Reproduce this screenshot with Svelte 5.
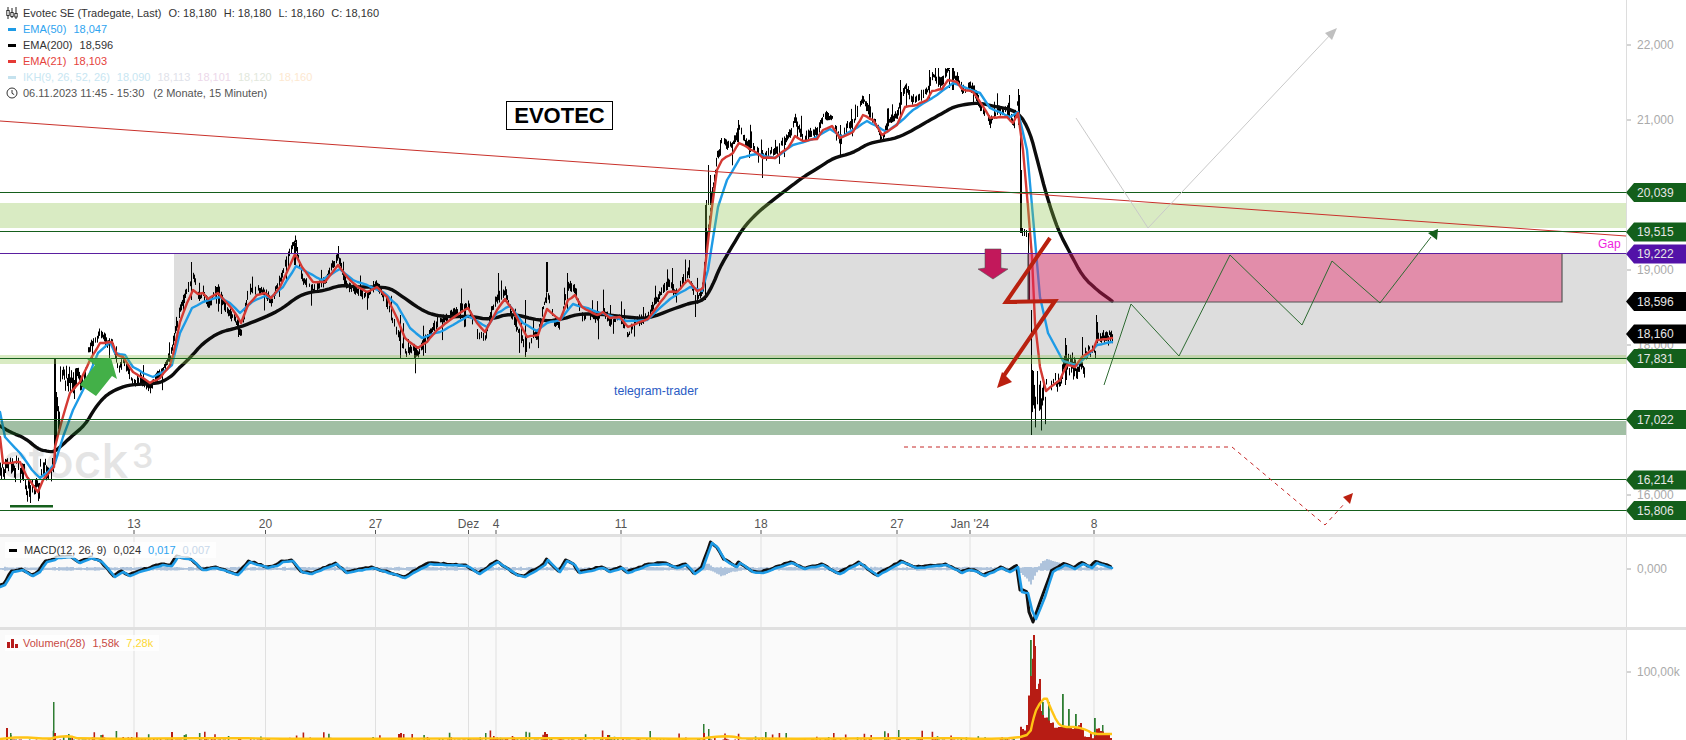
<script>
  function mulberry(a) {
    return () => {
      a |= 0; a = (a + 0x6d2b79f5) | 0;
      let t = Math.imul(a ^ (a >>> 15), 1 | a);
      t = (t + Math.imul(t ^ (t >>> 7), 61 | t)) ^ t;
      return ((t ^ (t >>> 14)) >>> 0) / 4294967296;
    };
  }
  const toPath = (p) => 'M' + p.map((q) => q[0].toFixed(1) + ' ' + q[1].toFixed(1)).join('L');
  const interp = (p, x) => {
    if (x <= p[0][0]) return p[0][1];
    for (let i = 1; i < p.length; i++) {
      if (x <= p[i][0]) {
        const [a, b] = p[i - 1], [c, d] = p[i];
        return b + ((d - b) * (x - a)) / (c - a || 1);
      }
    }
    return p[p.length - 1][1];
  };
  const chaikin = (p) => {
    const out = [p[0]];
    for (let i = 0; i < p.length - 1; i++) {
      const [a, b] = p[i], [c, d] = p[i + 1];
      out.push([a * 0.75 + c * 0.25, b * 0.75 + d * 0.25], [a * 0.25 + c * 0.75, b * 0.25 + d * 0.75]);
    }
    out.push(p[p.length - 1]);
    return out;
  };
  const wiggle = (p, seed, amt, step) => {
    const r = mulberry(seed);
    const out = [];
    for (let i = 0; i < p.length - 1; i++) {
      const [a, b] = p[i], [c, d] = p[i + 1];
      const n = Math.max(1, Math.round(Math.abs(c - a) / step));
      for (let k = 0; k < n; k++) {
        const t = k / n;
        out.push([a + (c - a) * t, b + (d - b) * t + (k === 0 ? 0 : (r() - 0.5) * amt)]);
      }
    }
    out.push(p[p.length - 1]);
    return out;
  };

  const red = [[0,437],[3,463],[8,463],[20,462],[27,477],[38,492],[43,480],[54,467],[55,447],[62,420],[70,393],[80,382],[90,360],[100,343],[112,342],[117,355],[123,357],[133,372],[143,378],[150,383],[160,378],[170,365],[173,355],[180,322],[187,303],[193,290],[198,294],[203,293],[208,299],[218,293],[227,303],[235,313],[241,323],[248,305],[257,295],[265,293],[271,298],[280,287],[287,272],[295,254],[302,267],[313,282],[325,282],[338,265],[348,278],[358,287],[367,292],[377,287],[387,297],[397,318],[405,338],[418,348],[427,342],[437,330],[450,320],[457,315],[468,308],[477,323],[485,332],[497,310],[505,299],[513,310],[527,337],[538,335],[547,309],[560,320],[568,300],[575,295],[582,307],[597,315],[603,312],[610,318],[620,317],[628,327],[648,319],[657,307],[668,292],[677,292],[688,280],[697,291],[703,288],[707,250],[712,207],[717,170],[722,160],[733,153],[739,143],[747,147],[757,153],[763,158],[775,158],[782,152],[788,148],[795,136],[803,141],[817,139],[823,130],[832,126],[840,138],[853,132],[863,115],[873,120],[882,135],[897,125],[905,107],[917,105],[927,100],[932,91],[942,89],[948,80],[957,82],[962,89],[973,92],[982,105],[990,118],[1000,117],[1007,117],[1013,123],[1018,113],[1023,150],[1028,207],[1032,257],[1035,323],[1040,367],[1046,391],[1060,380],[1067,365],[1075,367],[1082,357],[1093,350],[1097,340],[1107,339],[1112,338]];

  const blue = [[0,412],[5,437],[20,453],[32,470],[40,478],[48,472],[55,463],[63,437],[73,410],[83,390],[98,353],[110,342],[115,353],[125,355],[133,367],[143,373],[153,377],[163,372],[172,365],[180,333],[192,308],[203,302],[220,297],[230,303],[240,313],[252,302],[265,296],[270,298],[283,287],[296,266],[307,272],[322,280],[340,269],[353,280],[367,285],[383,292],[397,305],[410,328],[422,338],[430,335],[440,332],[453,325],[468,316],[487,327],[497,313],[510,306],[523,323],[537,331],[547,323],[560,320],[573,304],[583,307],[607,315],[627,321],[647,320],[670,299],[690,287],[702,291],[708,270],[718,207],[727,180],[740,158],[757,154],[775,158],[793,145],[813,139],[830,129],[842,137],[867,121],[887,132],[900,122],[913,110],[937,95],[953,83],[980,93],[990,108],[1010,117],[1018,112],[1027,150],[1033,217],[1040,297],[1048,333],[1063,361],[1077,365],[1088,355],[1097,345],[1112,342]];

  const black = [[0,426],[10,432],[25,438],[38,449],[46,451],[54,452],[60,447],[72,436],[85,425],[95,408],[105,396],[115,390],[128,385],[145,384],[160,383],[172,376],[177,370],[190,358],[203,343],[220,332],[237,328],[253,322],[270,315],[283,308],[297,297],[310,292],[323,291],[340,285],[357,287],[377,287],[390,288],[403,297],[420,309],[433,315],[450,317],[470,316],[490,320],[510,313],[540,321],[560,320],[577,314],[600,314],[627,317],[647,319],[673,309],[690,303],[703,301],[712,287],[720,267],[730,250],[743,228],[757,213],[773,200],[790,187],[803,177],[820,167],[833,158],[853,153],[867,144],[880,141],[897,138],[913,130],[930,120],[943,113],[953,107],[967,104],[980,103],[993,106],[1018,111],[1030,132],[1038,163],[1047,197],[1058,230],[1070,253],[1083,277],[1097,290],[1112,301]];

  const rnd = mulberry(41);
  let priceD = '';
  const bar = (x, a, b) => { priceD += `M${x + 0.5} ${a.toFixed(1)}V${b.toFixed(1)}`; };
  const massSegments = [
    [0, 25, 455, 482], [25, 40, 475, 505], [40, 54, 456, 480], [55, 60, 395, 435], [60, 86, 365, 398],
    [1031, 1046, 370, 424], [1046, 1062, 373, 390], [1062, 1075, 352, 382], [1075, 1085, 358, 378],
    [1085, 1096, 345, 358], [1096, 1113, 328, 345]
  ];
  for (const [a, b, t, u] of massSegments) {
    for (let x = a; x < b; x++) {
      if (rnd() < 0.15) continue;
      const h = u - t;
      const s = t + rnd() * h * 0.55;
      bar(x, s, s + h * (0.2 + rnd() * 0.45));
    }
  }
  for (let x = 86; x < 1019; x++) {
    if (rnd() < 0.22) continue;
    let lead = (interp(red, x) - interp(red, x - 7)) * 0.9;
    lead = Math.max(-14, Math.min(14, lead));
    const c = interp(red, x) + lead - (x > 720 ? 6 : 0);
    let top = c - rnd() * 5 - 1;
    let bot = c + rnd() * 5 + 1;
    const s = rnd();
    if (s < (x > 720 ? 0.12 : 0.08)) top -= 6 + rnd() * 15;
    else if (s < 0.16) bot += 6 + rnd() * 12;
    const ceil = interp(red, x) - 24;
    bar(x, Math.max(top, ceil, 68), bot);
  }
  const spikes = [
    [54,358,462],[55,358,462],[56,392,440],[546,262,292],[547,262,292],[525,300,357],[498,273,300],[567,273,310],[695,295,317],
    [294,243,265],[295,243,265],[191,262,300],[400,315,358],[414,350,358],[423,335,356],[238,320,337],
    [900,80,118],[929,70,100],[952,68,90],[953,68,90],[949,70,88],[738,120,145],[840,125,155],[1018,90,125],[1019,95,125],[762,150,178],
    [705,205,300],[706,200,260],[708,165,205],[710,175,205],[1020,125,233],[1021,170,233],[1022,228,236],[1024,229,236],[1026,230,237],[1028,233,300],[1029,270,300],[1031,310,435],[1032,370,410],[1065,338,385],[1066,345,380],[1082,337,357],[1096,315,340],[1097,322,338]
  ];
  spikes.forEach(([x, a, b]) => bar(x, a, b));

  const macdBlue = [[0,587],[5,585],[13,572],[23,570],[33,576],[40,572],[47,562],[55,560],[58,558],[72,557],[80,563],[92,558],[102,562],[115,577],[123,572],[130,576],[143,571],[163,565],[172,566],[178,557],[192,560],[203,570],[217,568],[238,575],[250,562],[268,568],[277,566],[283,562],[293,561],[302,572],[312,574],[337,564],[347,573],[373,568],[405,578],[430,564],[467,566],[480,574],[498,562],[517,575],[525,577],[545,565],[548,560],[560,572],[567,561],[575,565],[580,573],[603,568],[610,572],[622,568],[628,573],[650,565],[667,564],[677,568],[687,565],[695,574],[703,568],[712,543],[718,548],[725,560],[737,567],[740,563],[753,572],[763,573],[780,567],[792,563],[805,569],[823,565],[840,574],[860,563],[878,576],[902,562],[917,568],[947,565],[962,573],[970,570],[978,572],[985,576],[1002,568],[1010,572],[1018,567],[1022,592],[1028,593],[1032,610],[1036,619],[1045,597],[1053,572],[1065,565],[1075,569],[1083,564],[1092,568],[1097,563],[1112,568]];
  const macdBlack = macdBlue.map(([x, y]) => {
    if (x === 1022) return [1020, 590];
    if (x === 1032) return [1029, 612];
    if (x === 1036) return [1033, 622];
    if (x === 1045) return [1043, 594];
    return [x - 1.5, y - (x < 1010 ? 1 : 1.5)];
  });
  const histShape = [[0,0],[695,0],[703,-2],[707,-5],[712,1],[721,6],[730,2],[740,0],[1012,0],[1020,3],[1026,8],[1030,14],[1034,5],[1037,0],[1042,-6],[1046,-8],[1055,-6],[1062,-2],[1068,0],[1112,0]];
  const rh = mulberry(7);
  let histD = '';
  for (let x = 0; x < 1112; x += 2) {
    const v = interp(histShape, x);
    const n = rh() * 1.2 + 1;
    histD += `M${x} ${(569 + Math.min(v, 0) - n).toFixed(1)}H${x + 2}V${(569 + Math.max(v, 0) + n * 0.8).toFixed(1)}H${x}Z`;
  }

  const env = [[205,630],[205,585],[215,585],[218,610],[228,580],[235,480],[243,400],[249,315],[255,315],[256,470],[262,447],[267,447],[268,520],[272,555],[290,555],[295,570],[305,575],[312,590],[335,590],[350,590],[370,595],[385,585],[392,575],[400,618],[430,625],[440,585],[450,600],[470,610],[485,630]]
    .map(([a, b]) => [950 + a / 3, 530 + b / 3]);
  const rv = mulberry(13);
  let redBars = '', greenBars = '';
  for (let x = 0; x < 1018; x += 1.7) {
    const s = rv();
    if (s < 0.45) continue;
    const h = Math.pow(rv(), 5) * 9 + 0.5;
    const d = `M${x.toFixed(1)} 740V${(740 - h).toFixed(1)}h1.6V740Z`;
    if (rv() < 0.62) redBars += d; else greenBars += d;
  }
  for (let x = 1018; x < 1112; x += 2) {
    const top = interp(env, x);
    const y = 740 - (740 - top) * (0.88 + rv() * 0.12);
    redBars += `M${x} 740V${y.toFixed(1)}h2V740Z`;
  }
  [[6,728],[54,733],[171,732],[400,733],[398,734],[544,732],[546,734],[607,735],[703,733],[1090,733],[1033,635],[1039,679]].forEach(([x, y]) => {
    redBars += `M${x} 740V${y}h2V740Z`;
  });
  [[53,702],[10,733],[171,732],[703,724],[708,729],[898,730],[485,733],[1102,725]].forEach(([x, y]) => {
    greenBars += `M${x} 740V${y}h1.5V740Z`;
  });
  [[1030,640],[1033,667],[1036,693],[1042,702],[1062,694],[1068,709],[1075,714],[1094,718],[1048,702]].forEach(([x, y]) => {
    greenBars += `M${x} 740V${y}h1.8V740Z`;
  });
  const volLine = [[0,739],[20,737],[50,739],[56,737],[70,736],[80,739],[230,738],[300,739],[600,738],[700,739],[712,737],[730,736],[745,739],[950,738],[983,739],[1017,738],[1030,734],[1033,720],[1037,707],[1046,696],[1050,707],[1057,722],[1063,727],[1077,727],[1087,730],[1093,734],[1112,734]];

  const redLine = toPath(wiggle(red, 3, 1, 4));
  const blueLine = toPath(wiggle(blue, 5, 0.8, 5));
  const blackLine = toPath(chaikin(chaikin(black)));
  const macdB = toPath(wiggle(macdBlack, 9, 1.4, 3));
  const macdL = toPath(wiggle(macdBlue, 11, 1, 4));
  const volPath = toPath(chaikin(volLine));

  const xTicks = [[134,'13'],[265.5,'20'],[375.5,'27'],[468.5,'Dez'],[496,'4'],[621,'11'],[761,'18'],[897,'27'],[970,"Jan '24"],[1094,'8']];
  const hLines = [[192,'lv'],[231,'lv'],[358,'lv'],[419,'lv'],[479,'lv'],[510,'lv']];
  const yLabels = [[45,'22,000'],[120,'21,000'],[270,'19,000'],[345,'18,000'],[495,'16,000']];
  const tags = [
    [192.5,'20,039','green'],[232,'19,515','green'],[254,'19,222','purple'],[301.5,'18,596','dark'],
    [334,'18,160','dark'],[358.5,'17,831','green'],[419.5,'17,022','green'],[480,'16,214','green'],[510.5,'15,806','green']
  ];
  const tagShape = (y) => `1626,${y} 1634,${y - 9.5} 1686,${y - 9.5} 1686,${y + 9.5} 1634,${y + 9.5}`;
</script>

<div class="chart">
  <section class="pane main">
    <svg class="plot" width="1626" height="534" viewBox="0 0 1626 534">
      <rect class="grey" x="174" y="253" width="1452" height="105" />
      <text class="mark" x="3" y="478">stock</text>
      <text class="mark sup" x="132" y="468">3</text>

      <path class="price" d={priceD} />
      <path class="e200" d={blackLine} />
      <path class="e50" d={blueLine} />
      <path class="e21" d={redLine} />

      <rect class="lime" x="0" y="203" width="1626" height="25" />
      <rect class="lime" x="0" y="355" width="1626" height="9" />
      <rect class="deep" x="0" y="421" width="1626" height="14" />
      <rect class="rose" x="1028" y="253" width="534" height="49" />
      <path class="roseedge" d="M1028 253V302H1562V253" />

      <line class="trend" x1="0" y1="121" x2="1626" y2="236" />
      {#each hLines as [y]}
        <line class="lv" x1="0" x2="1626" y1={y + 0.5} y2={y + 0.5} />
      {/each}
      <line class="lp" x1="0" x2="1626" y1="253.5" y2="253.5" />

      <polygon class="ga" points="80,385 96,396 112,376 117,379 111,358 87,359 95,365" />
      <polygon class="pa" points="985,249 1001,249 1001,268 1008,269 993,279 978,269 985,268" />
      <polyline class="ra" points="1050,238 1006,302 1055,301 1003,377" />
      <polygon class="rh" points="997,388 1002,372 1012,382" />

      <polyline class="gl" points="1076,118 1148,228 1332,33" />
      <polygon class="glh" points="1337,28 1325,33 1332,40" />
      <polyline class="zz" points="1104,385 1131,304 1179,356 1230,255 1302,325 1332,261 1380,303 1431,237" />
      <polygon class="zzh" points="1428,233 1438,229 1437,240" />
      <polyline class="dash" points="904,447 1232,447 1325,525 1345,503" />
      <polygon class="rh" points="1343,497 1353,493 1350,504" />
      <rect class="lowbar" x="10" y="505" width="43" height="2.5" />

      <text class="tg" x="614" y="395">telegram-trader</text>
      <text class="gap" x="1598" y="248">Gap</text>

      {#each xTicks as [x, t]}
        <line class="tick" x1={x} x2={x} y1="530" y2="534" />
        <text class="xl" x={x} y="528">{t}</text>
      {/each}
    </svg>

    <svg class="axis" width="60" height="534" viewBox="1626 0 60 534">
      <line class="ax" x1="1626.5" x2="1626.5" y1="0" y2="534" />
      {#each yLabels as [y, t]}
        <line class="axt" x1="1627" x2="1631" y1={y} y2={y} />
        <text class="yl" x="1637" y={y + 4}>{t}</text>
      {/each}
      {#each tags as [y, t, k]}
        <polygon class={k} points={tagShape(y)} />
        <text class="tt" x="1637" y={y + 4}>{t}</text>
      {/each}
    </svg>

    <div class="evotec">EVOTEC</div>

    <div class="legend">
      <div class="row">
        <svg class="ic" width="12" height="12" viewBox="0 0 12 12">
          <path d="M2 0V12M6 1V11M10 0V12" stroke="#222" fill="none" />
          <rect x="0.8" y="3.5" width="2.4" height="5" fill="#fff" stroke="#222" stroke-width=".9" />
          <rect x="4.8" y="5.5" width="2.4" height="4" fill="#fff" stroke="#222" stroke-width=".9" />
          <rect x="8.8" y="6.5" width="2.4" height="3.5" fill="#fff" stroke="#222" stroke-width=".9" />
        </svg>
        <span class="dk">Evotec SE (Tradegate, Last)</span>
        <span class="dk">O: 18,180</span><span class="dk">H: 18,180</span><span class="dk">L: 18,160</span><span class="dk">C: 18,160</span>
      </div>
      <div class="row"><i class="dash-ic c-blue"></i><span class="t-blue">EMA(50)</span><span class="t-blue">18,047</span></div>
      <div class="row"><i class="dash-ic c-black"></i><span class="dk">EMA(200)</span><span class="dk">18,596</span></div>
      <div class="row"><i class="dash-ic c-red"></i><span class="t-red">EMA(21)</span><span class="t-red">18,103</span></div>
      <div class="row"><i class="dash-ic c-ikh"></i><span class="t-i1">IKH(9, 26, 52, 26)</span><span class="t-i2">18,090</span><span class="t-i3">18,113</span><span class="t-i4">18,101</span><span class="t-i5">18,120</span><span class="t-i6">18,160</span></div>
      <div class="row">
        <svg class="ic" width="12" height="12" viewBox="0 0 12 12">
          <circle cx="6" cy="6" r="5" fill="none" stroke="#333" />
          <path d="M6 3V6.3L8.2 7.6" fill="none" stroke="#333" />
        </svg>
        <span class="gy wide">06.11.2023 11:45 - 15:30</span><span class="gy">(2 Monate, 15 Minuten)</span>
      </div>
    </div>
  </section>

  <div class="sep"></div>

  <section class="pane sub macd">
    <svg class="plot" width="1626" height="90" viewBox="0 537 1626 90">
      {#each xTicks as [x]}
        <line class="grid" x1={x} x2={x} y1="537" y2="627" />
      {/each}
      <path class="hist" d={histD} />
      <path class="mb" d={macdB} />
      <path class="ml" d={macdL} />
    </svg>
    <svg class="axis" width="60" height="90" viewBox="1626 537 60 90">
      <line class="ax" x1="1626.5" x2="1626.5" y1="537" y2="627" />
      <line class="axt" x1="1627" x2="1631" y1="569" y2="569" />
      <text class="yl" x="1637" y="573">0,000</text>
    </svg>
    <div class="legend small">
      <div class="row chip"><i class="dash-ic c-black"></i><span class="dk">MACD(12, 26, 9)</span><span class="dk">0,024</span><span class="t-blue">0,017</span><span class="t-sig">0,007</span></div>
    </div>
  </section>

  <div class="sep"></div>

  <section class="pane sub vol">
    <svg class="plot" width="1626" height="110" viewBox="0 630 1626 110">
      {#each xTicks as [x]}
        <line class="grid" x1={x} x2={x} y1="630" y2="740" />
      {/each}
      <path class="vg" d={greenBars} />
      <path class="vr" d={redBars} />
      <path class="vl" d={volPath} />
    </svg>
    <svg class="axis" width="60" height="110" viewBox="1626 630 60 110">
      <line class="ax" x1="1626.5" x2="1626.5" y1="630" y2="740" />
      <line class="axt" x1="1627" x2="1631" y1="672" y2="672" />
      <text class="yl" x="1637" y="676">100,00k</text>
    </svg>
    <div class="legend small">
      <div class="row chip volchip">
        <svg class="ic" width="12" height="12" viewBox="0 0 12 12">
          <path d="M1 5h3v6H1zM5 2h3v9H5zM9 7h3v4H9z" fill="#b71c1c" />
        </svg>
        <span class="t-vol">Volumen(28)</span><span class="t-vol">1,58k</span><span class="t-yel">7,28k</span>
      </div>
    </div>
  </section>
</div>

<style>
  :global(body) { margin: 0; background: #fff; }
  .chart {
    width: 1686px; height: 740px; display: flex; flex-direction: column; overflow: hidden;
    font-family: "Liberation Sans", Arial, sans-serif; background: #fff;
  }
  .pane { position: relative; display: flex; flex: none; }
  .main { height: 534px; }
  .macd { height: 90px; }
  .vol { height: 110px; }
  .sub .plot { background: #fafafa; }
  .sep { height: 3px; background: #e0e0e0; flex: none; }
  svg { display: block; flex: none; }
  svg text { font-family: "Liberation Sans", Arial, sans-serif; }

  .evotec {
    position: absolute; left: 506px; top: 101px; width: 107px; height: 29px; box-sizing: border-box;
    border: 1px solid #000; background: #fff; color: #000;
    font-size: 22px; font-weight: 700; line-height: 27px; text-align: center;
  }

  .grey { fill: #ddd; }
  svg text.mark { font-family: Inter, sans-serif; font-size: 48px; font-weight: 500; fill: #e4e4e4; }
  svg text.mark.sup { font-size: 34px; }
  .price { stroke: #000; stroke-width: 1; fill: none; }
  .e200, .e50, .e21 { fill: none; stroke-linejoin: round; stroke-linecap: round; }
  .e200 { stroke: #0c0c0c; stroke-width: 3.4; }
  .e50 { stroke: #1e9be6; stroke-width: 2.4; }
  .e21 { stroke: #d43a34; stroke-width: 2.4; }
  .lime { fill: rgba(139, 195, 74, .33); }
  .deep { fill: rgba(21, 95, 28, .4); }
  .rose { fill: rgba(233, 30, 99, .42); }
  .roseedge { fill: none; stroke: #555; stroke-width: 1.2; }
  .trend { stroke: #c9312b; stroke-width: 1; }
  .lv { stroke: #155f1c; stroke-width: 1; }
  .lp { stroke: #5a1fa0; stroke-width: 1; }
  .ga { fill: #43b048; }
  .pa { fill: #c2185b; stroke: #555; stroke-width: .6; }
  .ra { fill: none; stroke: #b9210f; stroke-width: 4; stroke-linejoin: miter; }
  .rh { fill: #bb2010; }
  .gl { fill: none; stroke: #c9c9c9; stroke-width: 1; }
  .glh { fill: #c0c0c0; }
  .zz { fill: none; stroke: #2e6b32; stroke-width: 1; }
  .zzh { fill: #155f1c; }
  .dash { fill: none; stroke: #c62828; stroke-width: 1; stroke-dasharray: 4 4; }
  .lowbar { fill: #155f1c; }
  svg text.tg { font-size: 12.3px; fill: #2a5bc4; }
  svg text.gap { font-size: 12px; fill: #f01ee0; }
  .tick { stroke: #555; stroke-width: 1; }
  .xl { font-size: 12px; fill: #555; text-anchor: middle; }
  .ax { stroke: #ddd; stroke-width: 1; }
  .axt { stroke: #aaa; stroke-width: 1; }
  .yl { font-size: 12px; fill: #aaa; }
  .tt { font-size: 12px; fill: #e6e6e6; }
  .green { fill: #135f1b; }
  .purple { fill: #5312a8; }
  .dark { fill: #000; }

  .grid { stroke: #e0e0e0; stroke-width: 1; }
  .hist { fill: #aec3dc; }
  .mb, .ml { fill: none; stroke-linejoin: round; stroke-linecap: round; }
  .mb { stroke: #111; stroke-width: 3; }
  .ml { stroke: #1e9be6; stroke-width: 2.6; }
  .vg { fill: #2e7d32; }
  .vr { fill: #b71c14; }
  .vl { fill: none; stroke: #ffc414; stroke-width: 2.4; stroke-linejoin: round; }

  .legend {
    position: absolute; left: 6px; top: 5px; display: flex; flex-direction: column;
    font-size: 11px; line-height: 16px; white-space: nowrap;
  }
  .legend.small { top: 5px; left: 5px; }
  .row { display: flex; align-items: center; gap: 7px; height: 16px; }
  .chip { background: rgba(255, 255, 255, .75); padding: 0 6px 0 2px; }
  .volchip { padding-left: 1px; }
  .ic { margin-right: -2px; }
  .dash-ic { display: block; width: 8px; height: 3px; margin: 0 0 0 2px; }
  .c-blue { background: #1e9be6; }
  .c-black { background: #000; }
  .c-red { background: #e53935; }
  .c-ikh { background: #c5e2ee; }
  .dk { color: #333; }
  .gy { color: #555; }
  .wide { margin-right: 2px; }
  .t-blue { color: #2fa4f0; }
  .t-red { color: #e5423c; }
  .t-i1, .t-i2 { color: #c8e6f2; }
  .t-i3 { color: #dfe2ea; }
  .t-i4 { color: #ecd8ea; }
  .t-i5 { color: #e2e8dc; }
  .t-i6 { color: #fde8d0; }
  .t-sig { color: #c8d8ea; }
  .t-vol { color: #c84a44; }
  .t-yel { color: #fdd835; }
</style>
